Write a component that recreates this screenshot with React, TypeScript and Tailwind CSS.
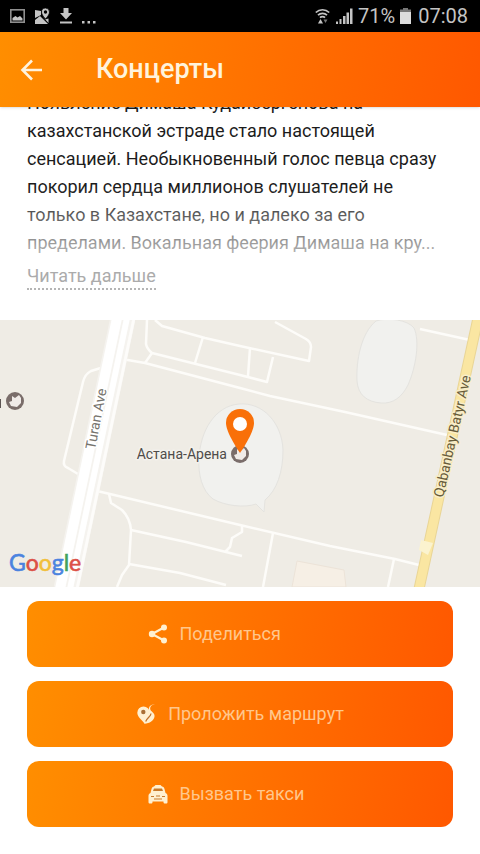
import type { ReactNode } from "react";

interface ActionButtonProps {
  icon: ReactNode;
  label: string;
}

function StatusBar() {
  return (
    <div className="h-8 bg-black text-[#c4c4c4] flex items-center justify-between pl-[10px] pr-3">
      <div className="flex items-center gap-[9px]">
        <svg className="w-[15px] h-[14px]" viewBox="0 0 15 14">
          <rect x="0.8" y="0.8" width="13.4" height="12.4" fill="none" stroke="#8f8f8f" strokeWidth="1.6" />
          <path d="M2.500 11.500V9l3-2 2 1.500L10 7l2.500 2.500v2z" fill="currentColor" />
        </svg>
        <svg className="w-4 h-[17px]" viewBox="0 0 16 17">
          <path d="M1 2l6 1v4L1 10zM1 12l5-4 8 8H1zM8.500 8.500l2.500 3 3.500-1V15z" fill="currentColor" />
          <path
            d="M11.500 0A4 4 0 0 0 7.500 4c0 3 4 7 4 7s4-4 4-7a4 4 0 0 0-4-4z"
            fill="currentColor"
            stroke="#000"
            strokeWidth="0.800"
          />
          <circle cx="11.5" cy="4" r="1.700" fill="#000" />
        </svg>
        <svg className="w-[14px] h-[16px]" viewBox="0 0 14 16" fill="currentColor">
          <path d="M4.500 0h5v5H13l-6 6.500L1 5h3.500zM1 13.500h12V15.500H1z" />
        </svg>
        <svg className="w-[14px] h-4" viewBox="0 0 14 16" fill="currentColor">
          <path d="M0 13h2.500v2.500H0zM5.500 13H8v2.500H5.500zM11 13h2.500v2.500H11z" />
        </svg>
      </div>

      <div className="flex items-center gap-[5px] text-xl leading-8">
        <svg className="w-[15px] h-[17px]" viewBox="0 0 15 17">
          <path
            d="M0.800 4.500a9.500 9.500 0 0 1 13.400 0M3 7.200a6.300 6.300 0 0 1 9 0M5 9.700a3.500 3.500 0 0 1 5 0"
            fill="none"
            stroke="currentColor"
            strokeWidth="1.700"
          />
          <path d="M3 15.500L5.500 11 8 15.500z" fill="currentColor" />
          <path d="M8.500 11.500h4L10.500 15z" fill="#777" />
        </svg>
        <svg className="w-[18px] h-4" viewBox="0 0 18 16" fill="currentColor">
          <path d="M1 13.500h2V16H1zM4.500 11h2v5h-2zM8 8h2.500v8H8zM11.500 4.500H14V16h-2.500zM15 0.500h2.500V16H15z" />
        </svg>
        <span>71%</span>
        <svg className="w-[11px] h-4 mr-[2px]" viewBox="0 0 11 16">
          <path d="M3 0h5v1.500h3V5H0V1.500h3z" fill="#777" />
          <path d="M0 4h11v12H0z" fill="#dcdcdc" />
        </svg>
        <span>07:08</span>
      </div>
    </div>
  );
}

function VenueMap() {
  return (
    <svg
      className="block w-full h-[267px] bg-[#efece5]"
      viewBox="0 0 480 267"
      preserveAspectRatio="xMidYMid slice"
      role="img"
      aria-label="Астана-Арена"
    >
      {/* Grounds and buildings */}
      <g fill="#f1f1ee" stroke="#e4e3df" strokeWidth="1">
        <path d="M376 1C388-3 408 0 414 8c6 13 2 39-6 57-6 12-15 19-27 18-14-1-23-8-24-22-1-20 4-48 19-60z" />
        <path d="M239 84c24-2 43 19 44 46 0 22-6 40-18 50l-1 12-8-8c-11 4-31 2-43-5-11-8-15-25-14-40 1-28 16-53 40-55z" />
      </g>
      <path d="M297 241l47 9 2 17h-54z" fill="#f6efe5" stroke="#ece3d8" />

      {/* Minor streets */}
      <g fill="none" stroke="#fdfcf9" strokeWidth="2.500" strokeLinejoin="round">
        <path d="M104 47l-13 4q-6 3-8 11L64 141q-1 5 4 7l10 6" />
        <path d="M147 0l-1 24q1 5 6 9l88 22 27 7 6-25" />
        <path d="M155 0l7 6 43 12 35 8 69 15 2-14q0-5-5-8L275 2" />
        <path d="M203 17l-8 26M152 33l-7 10M250 28l-2 28" />
        <path d="M122 39l23 4 95 25 30 8 75 16 102 23" />
        <path d="M420 9l50 11" />
        <path d="M97 171l13 3 130 31 90 21 65 13 24 6" />
        <path d="M109 174l2 9 11 7q8 8 9 20l-2 35-7 10-5 12" />
        <path d="M131 210l55 12 56 14M225 232l5-5 2-9 10-6v-7M129 244l51 9 46 12" />
        <path d="M273 213l-10 54M394 239l-6 28" />
      </g>

      {/* Avenues */}
      <path d="M123-2L66 269" stroke="#f5f3ef" strokeWidth="25" />
      <path d="M117-2L60 269" stroke="#fff" strokeWidth="10" />
      <path d="M127-2L70 269" stroke="#fff" strokeWidth="6" />
      <path d="M134-2L77 269" stroke="#fdfcfa" strokeWidth="3" />
      <path d="M478-2L419 269" stroke="#e9d596" strokeWidth="11" />
      <path d="M478-2L419 269" stroke="#fae6a2" strokeWidth="9" />
      <path d="M421 220l12 3-5 12-9-5z" fill="#fbf3cf" />

      {/* Labels */}
      <g fontFamily="Roboto, sans-serif" strokeLinejoin="round" paintOrder="stroke">
        <text x="95" y="130" transform="rotate(-79 95 130)" fontSize="14" fill="#77746e" stroke="#fff" strokeWidth="3">
          Turan Ave
        </text>
        <text x="443" y="178" transform="rotate(-77 443 178)" fontSize="14" fill="#675b39" stroke="#f8edc8" strokeWidth="3">
          Qabanbay Batyr Ave
        </text>
        <text x="227" y="139" textAnchor="end" fontSize="14" fill="#4f4c4a" stroke="#f3f1ec" strokeWidth="3">
          Астана-Арена
        </text>
      </g>
      <path d="M0 79v9" stroke="#5c5452" strokeWidth="2" />
      <circle cx="15" cy="81" r="9" fill="#7a6d6a" />
      <path d="M12 76l3 2 4-3 2 3v5l-4 4-6-1-2-4 3-1z" fill="#f0ebe8" />
      <circle cx="240" cy="134" r="9" fill="#7a6d6a" />
      <path d="M237 129l3 2 4-3 2 3v5l-4 4-6-1-2-4 3-1z" fill="#f0ebe8" />

      {/* Pin */}
      <path
        d="M240 89a14 14 0 0 0-14 14c0 10 14 30 14 30s14-20 14-30a14 14 0 0 0-14-14z"
        fill="#f97009"
      />
      <circle cx="240" cy="104" r="7" fill="#fff" />

      <text x="9" y="251" fontFamily="Lato, sans-serif" fontSize="23" strokeWidth="0.600">
        <tspan fill="#4b83df" stroke="#4b83df">G</tspan>
        <tspan fill="#dc5147" stroke="#dc5147">o</tspan>
        <tspan fill="#f1bf3b" stroke="#f1bf3b">o</tspan>
        <tspan fill="#4b83df" stroke="#4b83df">g</tspan>
        <tspan fill="#42a45c" stroke="#42a45c">l</tspan>
        <tspan fill="#dc5147" stroke="#dc5147">e</tspan>
      </text>
    </svg>
  );
}

function ShareIcon() {
  return (
    <svg className="w-5 h-5" viewBox="0 0 20 20">
      <path d="M16 3.500L4 10l12 6.500" fill="none" stroke="#fff0d0" strokeWidth="2.200" />
      <g fill="#fff0d0">
        <circle cx="16" cy="3.500" r="3" />
        <circle cx="4" cy="10" r="3.200" />
        <circle cx="16" cy="16.500" r="3" />
      </g>
    </svg>
  );
}

function RouteIcon() {
  return (
    <svg className="w-5 h-5" viewBox="0 0 20 20">
      <path
        d="M19 .5c-4 0-5.500 3-4.500 5.500 1 2 4.500 3 4 6.500-.5 4-5 7-10 7.200L7 14l5-5c1-1 .5-3 1-5 .5-2.500 3-4 6-3.500z"
        fill="#fff0d0"
      />
      <path
        d="M7.500 2.500A6.200 6.200 0 0 0 1.300 8.700c0 4.500 5 7 7.200 11 .7-4 5.200-6.500 5.200-11a6.200 6.200 0 0 0-6.200-6.200z"
        fill="#fff0d0"
      />
      <circle cx="7.3" cy="8" r="2.200" fill="#a96f35" />
      <path d="M15 9.500c0 3-4 4-5.300 8" fill="none" stroke="#c0702a" strokeWidth="1.200" />
    </svg>
  );
}

function TaxiIcon() {
  return (
    <svg className="w-5 h-5" viewBox="0 0 20 20">
      <path
        d="M6 2.500L7.500 1h5L14 2.500c1.500 0 2 1 2.500 2.500l1 4c1.500.5 2 1.500 2 3V18c0 1-.5 1.500-1.500 1.500h-1c-1 0-1.500-.5-1.500-1.500v-.5h-11V18c0 1-.5 1.500-1.500 1.500H2C1 19.500.5 19 .5 18v-6c0-1.500.5-2.500 2-3l1-4C4 3.500 4.500 2.500 6 2.500z"
        fill="#fff0d0"
      />
      <path d="M6 4.500h8l1 2.500H5z" fill="#c87a2c" />
      <path d="M3 12.500h3M8 12h4M14 12.500h3M6 15h8" stroke="#c87a2c" strokeWidth="1.200" />
    </svg>
  );
}

function ActionButton({ icon, label }: ActionButtonProps) {
  return (
    <button
      type="button"
      className="w-full h-[66px] rounded-xl bg-[linear-gradient(100deg,#ff8e00,#ff7300_50%,#ff5800)] flex items-center justify-center gap-3 text-lg text-[#ffc78c]"
    >
      {icon}
      <span className="min-w-[153px] text-left">{label}</span>
    </button>
  );
}

export default function App() {
  return (
    <div className="min-h-screen bg-white font-[Roboto,sans-serif]">
      <StatusBar />

      <header className="relative z-10 h-[75px] flex items-center gap-[52px] px-5 bg-[linear-gradient(100deg,#ff8e00,#ff7300_50%,#ff5800)] shadow-sm">
        <button type="button" aria-label="Назад">
          <svg className="w-6 h-6" viewBox="0 0 24 24" fill="none" stroke="#fff3dc" strokeWidth="2.600">
            <path d="M22 12H3M12 2.500L2.500 12l9.500 9.500" />
          </svg>
        </button>
        <h1 className="text-[27px] font-medium text-[#fff3dc]">Концерты</h1>
      </header>

      <main>
        {/* Description */}
        <section className="px-[27px] pb-[30px]">
          <div className="relative -mt-[18px]">
            <p className="text-lg leading-7 text-[#1c1c1c]">
              Появление Димаша Кудайбергенова на казахстанской эстраде стало настоящей
              сенсацией. Необыкновенный голос певца сразу покорил сердца миллионов
              слушателей не только в Казахстане, но и далеко за его пределами. Вокальная
              феерия Димаша на кру...
            </p>
            <div className="absolute inset-x-0 bottom-0 h-[70px] bg-linear-to-b from-white/0 to-white/70" />
          </div>
          <a
            href="#more"
            className="inline-block mt-[7px] text-lg leading-6 text-[#ababab] border-b-2 border-dotted border-[#b5b5b5]"
          >
            Читать дальше
          </a>
        </section>

        <VenueMap />

        {/* Actions */}
        <div className="px-[27px] py-[14px] flex flex-col gap-[14px]">
          <ActionButton icon={<ShareIcon />} label="Поделиться" />
          <ActionButton icon={<RouteIcon />} label="Проложить маршрут" />
          <ActionButton icon={<TaxiIcon />} label="Вызвать такси" />
        </div>
      </main>
    </div>
  );
}
